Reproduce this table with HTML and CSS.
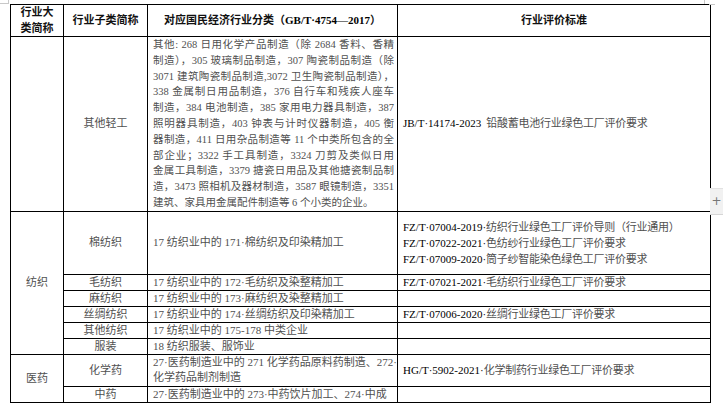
FILE: index.html
```html
<!DOCTYPE html>
<html lang="zh-CN">
<head>
<meta charset="utf-8">
<title>行业评价标准</title>
<link rel="stylesheet" href="styles.css">
</head>
<body>
<div class="page">
  <span class="mark mark-tl-v"></span>
  <span class="mark mark-tl-h"></span>
  <span class="mark mark-tr-v"></span>
  <span class="mark mark-tr-h"></span>
  <table class="grid">
    <colgroup>
      <col class="c1"><col class="c2"><col class="c3"><col class="c4">
    </colgroup>
    <thead>
      <tr>
        <th>行业大<br>类简称</th>
        <th>行业子类简称</th>
        <th>对应国民经济行业分类（<span class="en">GB/T·4754—2017</span>）</th>
        <th>行业评价标准</th>
      </tr>
    </thead>
    <tbody>
      <tr>
        <td class="center"></td>
        <td class="center">其他轻工</td>
        <td class="long">
          <span class="ln">其他: 268 日用化学产品制造（除 2684 香料、香精</span>
          <span class="ln">制造），305 玻璃制品制造，307 陶瓷制品制造（除</span>
          <span class="ln">3071 建筑陶瓷制品制造,3072 卫生陶瓷制品制造），</span>
          <span class="ln">338 金属制日用品制造，376 自行车和残疾人座车</span>
          <span class="ln">制造，384 电池制造，385 家用电力器具制造，387</span>
          <span class="ln">照明器具制造，403 钟表与计时仪器制造，405 衡</span>
          <span class="ln">器制造，411 日用杂品制造等 11 个中类所包含的全</span>
          <span class="ln">部企业；3322 手工具制造，3324 刀剪及类似日用</span>
          <span class="ln">金属工具制造，3379 搪瓷日用品及其他搪瓷制品制</span>
          <span class="ln">造，3473 照相机及器材制造，3587 眼镜制造，3351</span>
          <span class="ln last">建筑、家具用金属配件制造等 6 个小类的企业。</span>
        </td>
        <td class="std"><span class="en">JB/T·14174-2023</span>&nbsp; 铅酸蓄电池行业绿色工厂评价要求</td>
      </tr>
      <tr>
        <td class="center" rowspan="6">纺织</td>
        <td class="center">棉纺织</td>
        <td>17 纺织业中的 171·棉纺织及印染精加工</td>
        <td class="std multi">
          <span class="en">FZ/T·07004-2019·</span>纺织行业绿色工厂评价导则（行业通用）<br>
          <span class="en">FZ/T·07022-2021·</span>色纺纱行业绿色工厂评价要求<br>
          <span class="en">FZ/T·07009-2020·</span>筒子纱智能染色绿色工厂评价要求
        </td>
      </tr>
      <tr class="row-mao">
        <td class="center">毛纺织</td>
        <td>17 纺织业中的 172·毛纺织及染整精加工</td>
        <td class="std"><span class="en">FZ/T·07021-2021·</span>毛纺织行业绿色工厂评价要求</td>
      </tr>
      <tr>
        <td class="center">麻纺织</td>
        <td>17 纺织业中的 173·麻纺织及染整精加工</td>
        <td class="std"></td>
      </tr>
      <tr>
        <td class="center">丝绸纺织</td>
        <td>17 纺织业中的 174·丝绸纺织及印染精加工</td>
        <td class="std"><span class="en">FZ/T·07006-2020·</span>丝绸行业绿色工厂评价要求</td>
      </tr>
      <tr>
        <td class="center">其他纺织</td>
        <td>17 纺织业中的 175-178 中类企业</td>
        <td class="std"></td>
      </tr>
      <tr>
        <td class="center">服装</td>
        <td>18 纺织服装、服饰业</td>
        <td class="std"></td>
      </tr>
      <tr>
        <td class="center" rowspan="2">医药</td>
        <td class="center">化学药</td>
        <td class="two">27·医药制造业中的 271 化学药品原料药制造、272·<br>化学药品制剂制造</td>
        <td class="std"><span class="en">HG/T·5902-2021·</span>化学制药行业绿色工厂评价要求</td>
      </tr>
      <tr>
        <td class="center">中药</td>
        <td class="clip">27·医药制造业中的 273·中药饮片加工、274·中成</td>
        <td class="std"></td>
      </tr>
    </tbody>
  </table>
  <div class="add-btn">+</div>
</div>
</body>
</html>
```

FILE: styles.css
```css
html, body {
  margin: 0;
  padding: 0;
  background: #ffffff;
}

.page {
  position: relative;
  width: 723px;
  height: 413px;
  overflow: hidden;
  padding: 4px 0 0 10px;
  box-sizing: border-box;
  font-family: "Liberation Serif", "Noto Sans CJK SC", serif;
  font-size: 11px;
  color: #505050;
}

.grid {
  border-collapse: collapse;
  table-layout: fixed;
  width: 700px;
}

.c1 { width: 53px; }
.c2 { width: 84px; }
.c3 { width: 250px; }
.c4 { width: 313px; }

.grid th,
.grid td {
  border: 1px solid #000;
  padding: 0 3px 0 5px;
  line-height: 15px;
  vertical-align: middle;
  text-align: left;
  white-space: nowrap;
  overflow: hidden;
}

.grid th {
  font-weight: bold;
  text-align: center;
  color: #111;
  line-height: 15.5px;
  padding: 0 2px;
}

.grid td.center {
  text-align: center;
  padding: 0 2px;
}

.grid td.std {
  letter-spacing: -0.25px;
}

.grid td.long {
  font-size: 10.5px;
  line-height: 15.8px;
  white-space: normal;
}

.ln {
  display: block;
  text-align: justify;
  text-align-last: justify;
}

.ln.last {
  text-align-last: left;
}

.grid td.multi {
  line-height: 16px;
  padding-top: 7px;
  padding-bottom: 7px;
}

.grid td.two {
  line-height: 15.5px;
}

.en {
  color: #000;
  letter-spacing: 0;
}

.mark {
  position: absolute;
  background: #c8c8c8;
}

.mark-tl-v { left: 8px; top: 0; width: 1px; height: 4px; }
.mark-tl-h { left: 0; top: 3px; width: 9px; height: 1px; }
.mark-tr-v { left: 704px; top: 0; width: 1px; height: 4px; }
.mark-tr-h { left: 709px; top: 4px; width: 6px; height: 1px; }

.add-btn {
  position: absolute;
  left: 710px;
  top: 188px;
  width: 13px;
  height: 27px;
  background: #f1f1f1;
  border-top: 1px solid #e2e2e2;
  border-bottom: 1px solid #d6d6d6;
  box-sizing: border-box;
  color: #777;
  font-family: "DejaVu Sans", sans-serif;
  font-size: 12px;
  line-height: 25px;
  text-align: center;
}
```
